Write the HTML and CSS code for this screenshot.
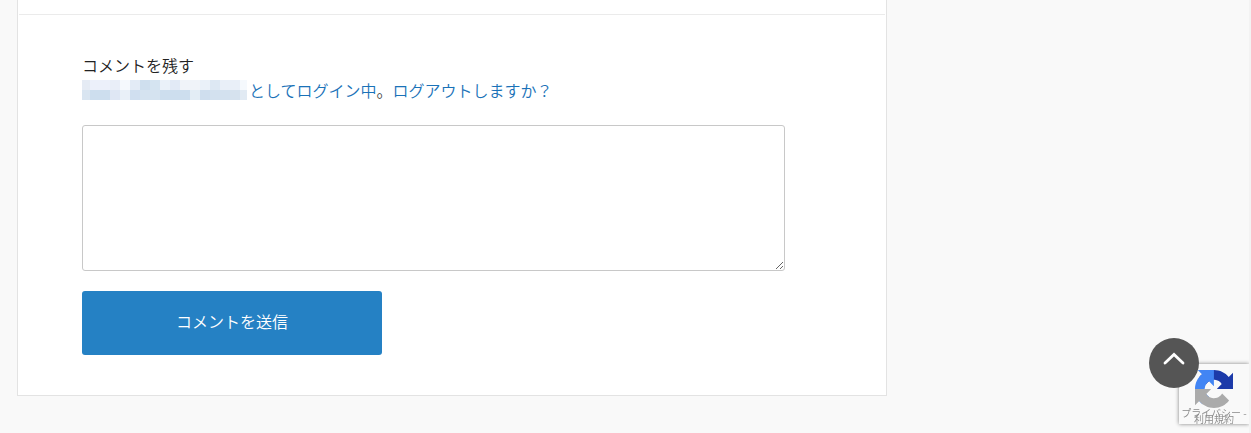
FILE: index.html
```
<!DOCTYPE html>
<html lang="ja">
<head>
<meta charset="utf-8">
<title>コメントを残す</title>
<link rel="stylesheet" href="styles.css">
</head>
<body>
<main class="card">
  <hr class="divider">
  <form class="comment-form">
    <h3 class="form-title">コメントを残す</h3>
    <div class="login-row">
      <svg class="masked-name" width="165" height="20" viewBox="0 0 165 20" shape-rendering="crispEdges" aria-hidden="true">
        <path fill="#e5ebf4" d="M0 0h8v10H0z"/><path fill="#ecf0fa" d="M8 0h20v10H8z"/><path fill="#e9eef8" d="M28 0h10v10H28z"/><path fill="#f5f9fd" d="M38 0h10v10H38z"/><path fill="#e3ebf6" d="M48 0h10v10H48z"/><path fill="#cfdfee" d="M58 0h10v10H58z"/><path fill="#d5e4f1" d="M68 0h10v10H68z"/><path fill="#eaf1f9" d="M78 0h10v10H78z"/><path fill="#e2eaf6" d="M88 0h10v10H88z"/><path fill="#f0f3f9" d="M98 0h20v10H98z"/><path fill="#eaf1f9" d="M118 0h10v10h-10z"/><path fill="#dde8f3" d="M128 0h10v10h-10z"/><path fill="#e9eff8" d="M138 0h20v10h-20z"/><path fill="#f5f9fd" d="M158 0h7v10h-7z"/>
        <path fill="#d9e5f1" d="M0 10h8v10H0z"/><path fill="#cddeee" d="M8 10h20v10H8z"/><path fill="#dfe7f4" d="M28 10h10v10H28z"/><path fill="#e9f0f8" d="M38 10h10v10H38z"/><path fill="#d0dff0" d="M48 10h10v10H48z"/><path fill="#d5e3f0" d="M58 10h20v10H58z"/><path fill="#cddeee" d="M78 10h30v10H78z"/><path fill="#e3edf5" d="M108 10h10v10h-10z"/><path fill="#cfdeee" d="M118 10h10v10h-10z"/><path fill="#d3e1ef" d="M128 10h20v10h-20z"/><path fill="#d6e2ee" d="M148 10h10v10h-10z"/><path fill="#e1eaf3" d="M158 10h7v10h-7z"/>
      </svg>
      <p class="login-text"><a class="link">としてログイン中</a>。<a class="link">ログアウトしますか？</a></p>
    </div>
    <textarea class="comment-box"></textarea>
    <button class="submit" type="button">コメントを送信</button>
  </form>
</main>
<div class="page-edge"></div>
<aside class="captcha">
  <svg class="captcha-logo" width="38" height="38" viewBox="0 0 64 64">
    <path fill="#1c3aa9" d="M64 31.955l-.033-1.37V4.687l-7.16 7.16C50.948 4.674 42.033.093 32.05.093c-10.4 0-19.622 4.96-25.458 12.64l11.736 11.86a15.55 15.55 0 0 1 4.754-5.334c2.05-1.6 4.952-2.906 8.968-2.906.485 0 .86.057 1.135.163 4.976.393 9.288 3.14 11.828 7.124l-8.307 8.307L64 31.953"/>
    <path fill="#4285f4" d="M31.862.094l-1.37.033H4.594l7.16 7.16C4.58 13.147 0 22.06 0 32.046c0 10.4 4.96 19.622 12.64 25.458L24.5 45.768a15.55 15.55 0 0 1-5.334-4.754c-1.6-2.05-2.906-4.952-2.906-8.968 0-.485.057-.86.163-1.135.393-4.976 3.14-9.288 7.124-11.828l8.307 8.307L31.86.095"/>
    <path fill="#ababab" d="M.001 32.045l.033 1.37v25.898l7.16-7.16c5.86 7.173 14.774 11.754 24.76 11.754 10.4 0 19.622-4.96 25.458-12.64l-11.736-11.86a15.55 15.55 0 0 1-4.754 5.334c-2.05 1.6-4.952 2.906-8.968 2.906-.485 0-.86-.057-1.135-.163-4.976-.393-9.288-3.14-11.828-7.124l8.307-8.307c-10.522.04-22.4.066-27.295-.005"/>
  </svg>
  <div class="captcha-text"><span>プライバシー -</span><span>利用規約</span></div>
</aside>
<a class="to-top" aria-label="ページ上部へ">
  <svg width="22" height="14" viewBox="0 0 22 14"><path d="M2 12 11 3.500l9 8.500" fill="none" stroke="#fff" stroke-width="2.800" stroke-linecap="round"/></svg>
</a>
</body>
</html>
```
FILE: styles.css
```
* { box-sizing: border-box; }
body {
  margin: 0;
  height: 433px;
  overflow: hidden;
  background: #f9f9f9;
  color: #333;
  font-family: "Noto Sans CJK JP", sans-serif;
  font-size: 16px;
  font-weight: 350;
}
.card {
  width: 870px;
  height: 396px;
  margin-left: 17px;
  background: #fff;
  border: 1px solid #e3e3e3;
  border-top: 0;
}
.divider {
  margin: 0 1px;
  padding-top: 14px;
  border: 0;
  border-bottom: 1px solid #ebebeb;
}
.comment-form {
  display: flex;
  flex-direction: column;
  align-items: flex-start;
  padding: 38px 64px 0;
}
.form-title {
  margin: 0;
  color: #222;
  font-size: 16px;
  font-weight: 350;
  line-height: 24px;
}
.login-row {
  display: flex;
  align-items: flex-start;
  gap: 2px;
  height: 48px;
  padding-top: 3px;
}
.login-text { margin: -3px 0 0; line-height: 26px; }
.masked-name { display: block; }
.link { color: #1a72b8; }
.comment-box {
  display: block;
  width: 703px;
  height: 146px;
  margin: 0 0 20px;
  border: 1px solid #c8c8c8;
  border-radius: 3px;
  background: #fff;
  outline: 0;
}
.submit {
  width: 300px;
  height: 64px;
  padding: 0 0 4px;
  border: 0;
  border-radius: 3px;
  background: #2581c4;
  color: #fff;
  font: inherit;
}
.page-edge {
  position: fixed;
  inset: 0 0 0 auto;
  width: 2px;
  background: #f3f3f3;
}
.captcha {
  position: fixed;
  left: 1179px;
  top: 364px;
  width: 70px;
  height: 60px;
  padding-top: 6px;
  background: #f9f9f9;
  box-shadow: 0 0 4px #808080;
  clip-path: inset(-6px 0 -6px -6px);
}
.captcha-logo { display: block; margin-left: 16px; }
.captcha-text {
  display: flex;
  flex-direction: column;
  align-items: center;
  margin-top: 2px;
  color: #888;
  font-size: 10px;
  line-height: 6px;
  white-space: nowrap;
}
.to-top {
  position: fixed;
  left: 1149px;
  top: 338px;
  display: flex;
  justify-content: center;
  width: 50px;
  height: 50px;
  padding-top: 13px;
  border-radius: 50%;
  background: #555;
}
```
